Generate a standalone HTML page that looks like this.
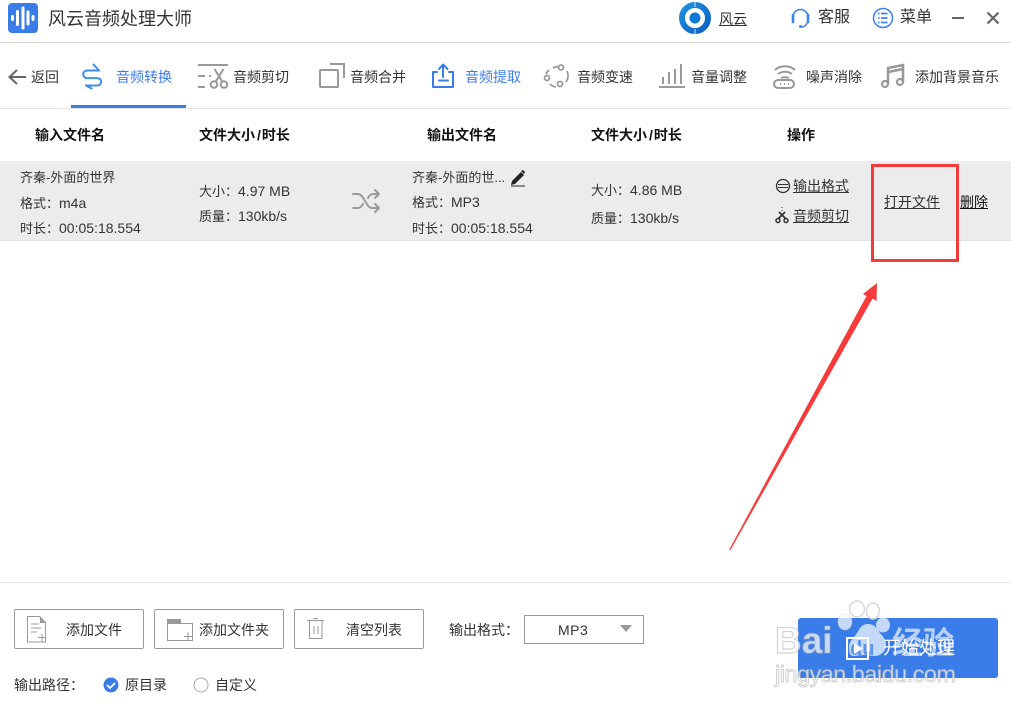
<!DOCTYPE html>
<html lang="zh-CN"><head><meta charset="utf-8"><title>风云音频处理大师</title>
<style>
html,body{margin:0;padding:0;background:#fff}
#p{position:relative;width:1011px;height:709px;overflow:hidden;background:#fff;font-family:"Liberation Sans","Noto Sans CJK SC",sans-serif;color:#333;font-size:14px}
.t{position:absolute;white-space:nowrap;line-height:20px;height:20px}
.b{position:absolute;background:#000}
.s13{font-size:13px}.s14{font-size:14px}.s16{font-size:16px}
.s13 i{font-style:normal;font-size:14px}
.blue{color:#3b7de9}
.h{font-weight:bold;color:#111}
.h i{font-style:normal;margin:0 1px 0 2px}
.u{text-decoration:underline}
.btn{position:absolute;top:609px;width:128px;height:38px;border:1px solid #999;border-radius:2px}
svg{position:absolute;left:0;top:0}
</style></head><body><div id="p">
<div class="b" style="left:0;top:42px;width:1011px;height:1px;background:#d8d8d8"></div>
<div class="b" style="left:0;top:108px;width:1011px;height:1px;background:#e6e6e6"></div>
<div class="b" style="left:71px;top:105px;width:115px;height:3px;background:#3a7ce8"></div>
<div class="b" style="left:0;top:161px;width:1011px;height:79px;background:#ececec"></div>
<div class="b" style="left:0;top:240px;width:1011px;height:1px;background:#e2e2e2"></div>
<div class="b" style="left:0;top:582px;width:1011px;height:1px;background:#e5e5e5"></div>
<div class="b" style="left:798px;top:618px;width:200px;height:60px;background:#3a7ce8;border-radius:3px"></div>

<div class="t" style="left:48px;top:9px;font-size:18px;color:#333">风云音频处理大师</div>
<div class="t s14 u" style="left:719px;top:9px">风云</div>
<div class="t s16" style="left:818px;top:8px">客服</div>
<div class="t s16" style="left:900px;top:8px">菜单</div>

<div class="t s14" style="left:31px;top:67px">返回</div>
<div class="t s14 blue" style="left:116px;top:67px">音频转换</div>
<div class="t s14" style="left:233px;top:67px">音频剪切</div>
<div class="t s14" style="left:350px;top:67px">音频合并</div>
<div class="t s14 blue" style="left:465px;top:67px">音频提取</div>
<div class="t s14" style="left:577px;top:67px">音频变速</div>
<div class="t s14" style="left:691px;top:67px">音量调整</div>
<div class="t s14" style="left:806px;top:67px">噪声消除</div>
<div class="t s14" style="left:915px;top:67px">添加背景音乐</div>

<div class="t s14 h" style="left:35px;top:125px">输入文件名</div>
<div class="t s14 h" style="left:199px;top:125px">文件大小<i>/</i>时长</div>
<div class="t s14 h" style="left:427px;top:125px">输出文件名</div>
<div class="t s14 h" style="left:591px;top:125px">文件大小<i>/</i>时长</div>
<div class="t s14 h" style="left:787px;top:125px">操作</div>

<div class="t s13" style="left:20px;top:168px">齐秦-外面的世界</div>
<div class="t s13" style="left:20px;top:193px">格式：<i>m4a</i></div>
<div class="t s13" style="left:20px;top:218px">时长：<i>00:05:18.554</i></div>
<div class="t s13" style="left:199px;top:181px">大小：<i>4.97 MB</i></div>
<div class="t s13" style="left:199px;top:206px">质量：<i>130kb/s</i></div>
<div class="t s13" style="left:412px;top:168px">齐秦-外面的世...</div>
<div class="t s13" style="left:412px;top:192px">格式：<i>MP3</i></div>
<div class="t s13" style="left:412px;top:218px">时长：<i>00:05:18.554</i></div>
<div class="t s13" style="left:591px;top:180px">大小：<i>4.86 MB</i></div>
<div class="t s13" style="left:591px;top:208px">质量：<i>130kb/s</i></div>
<div class="t s14 u" style="left:793px;top:176px">输出格式</div>
<div class="t s14 u" style="left:793px;top:206px">音频剪切</div>
<div class="t s14 u" style="left:884px;top:192px">打开文件</div>
<div class="t s14 u" style="left:960px;top:192px;color:#111">删除</div>

<div class="btn" style="left:14px"></div><div class="btn" style="left:154px"></div><div class="btn" style="left:294px"></div>
<div class="t s14" style="left:66px;top:620px">添加文件</div>
<div class="t s14" style="left:199px;top:620px">添加文件夹</div>
<div class="t s14" style="left:346px;top:620px">清空列表</div>
<div class="t s14" style="left:14px;top:675px">输出路径：</div>
<div class="t s14" style="left:125px;top:675px">原目录</div>
<div class="t s14" style="left:215px;top:675px">自定义</div>
<div class="t s14" style="left:449px;top:620px">输出格式：</div>
<div class="b" style="left:524px;top:615px;width:118px;height:27px;background:#fff;border:1px solid #999"></div>
<div class="t s14" style="left:558px;top:620px;letter-spacing:.5px">MP3</div>
<div class="t" style="left:883px;top:638px;font-size:18px;color:#fff">开始处理</div>

<svg width="1011" height="709" viewBox="0 0 1011 709" fill="none">
<defs><linearGradient id="g" x1="0" y1="0" x2="1" y2="1"><stop offset="0" stop-color="#1f8fe0"/><stop offset="1" stop-color="#0b62c4"/></linearGradient></defs>
<!-- app logo -->
<rect x="8" y="3" width="30" height="30" rx="4" fill="#3a7ce8"/>
<g stroke="#fff" stroke-linecap="round" fill="none" stroke-width="3"><path d="M12.500 16.500v3"/><path d="M17.500 11.500v13"/><path d="M23 8v20"/><path d="M28 12v12"/><path d="M33 16.500v3"/></g>
<!-- top right -->
<circle cx="695" cy="18" r="13" stroke="url(#g)" stroke-width="6"/>
<circle cx="695" cy="18" r="5.500" fill="#0e78d8"/>
<path d="M695 2v5M695 29v5" stroke="#cfe4f7" stroke-width="1"/>
<path d="M793 21v-4a7.500 7.500 0 0 1 15 0v4" stroke="#3b82ee" stroke-width="1.600"/>
<path d="M793 15v7M808 15v7" stroke="#3b82ee" stroke-width="2.600" stroke-linecap="round"/>
<path d="M807 23c-1 3-3 4-6 4" stroke="#3b82ee" stroke-width="1.500"/><circle cx="800.500" cy="26.500" r="1.500" fill="#3b82ee"/>
<circle cx="883" cy="18" r="9.500" stroke="#3b82ee" stroke-width="1.500"/>
<path d="M881 13.500h6.500M881 18h6.500M881 22.500h6.500" stroke="#3b82ee" stroke-width="1.800"/>
<path d="M878 13.500h1.500M878 18h1.500M878 22.500h1.500" stroke="#3b82ee" stroke-width="1.800"/>
<path d="M952 18h12" stroke="#666" stroke-width="2"/>
<path d="M987.500 12.500l11 11M998.500 12.500l-11 11" stroke="#666" stroke-width="2.200"/>
<!-- nav icons -->
<path d="M26 77H10M17 70l-7.500 7 7.500 7" stroke="#666" stroke-width="2"/>
<g stroke="#3d8ee8" stroke-width="2" stroke-linecap="round" stroke-linejoin="round">
<path d="M99 70.500H87a3.800 3.800 0 0 0 0 7.600H97.500a3.500 3.500 0 0 1 0 7.400H86"/><path d="M93.500 64.500l5.500 6"/><path d="M86 85.500l5.500 3"/></g>
<g stroke="#999" stroke-width="2"><path d="M198 65h30M198 76h7M198 87h7M209 76h2"/>
<path d="M214.500 69l8 13M223.500 69l-8 13" stroke-width="2"/><circle cx="214" cy="84.500" r="3.300"/><circle cx="224" cy="84.500" r="3.300"/></g>
<g stroke="#999" stroke-width="2"><rect x="320" y="70" width="18" height="17" rx="1"/><path d="M330 64h14v14"/></g>
<g stroke="#3a7ce8" stroke-width="2" stroke-linecap="round" stroke-linejoin="round"><path d="M437 72h-4v15h20V72h-4"/><path d="M443 77V65M439 69l4-4.500 4.500 4.500"/><path d="M439 80.500h9"/></g>
<g stroke="#999" stroke-width="1.800"><path d="M553 68a11 11 0 0 1 6-1.500M567 71a11 11 0 0 1-1 11M556 87a11 11 0 0 1-6-3M546 74a11 11 0 0 1 3-4"/><circle cx="561" cy="67.500" r="2.500"/><circle cx="547" cy="78" r="2.500"/><circle cx="560" cy="84" r="2.500"/></g>
<g stroke="#999" stroke-width="2"><path d="M659 87h26M663 84v-7M669 84V72M675 84V69M681 84V64"/></g>
<g stroke="#999" stroke-width="2"><path d="M775 70c5-5 15-5 20 0M778 74c4-3 10-3 14 0M781 78c2-1 6-1 8 0"/><rect x="774" y="80" width="20" height="8" rx="4" stroke-width="2"/><path d="M780 84h1M784 84h1M788 84h1"/></g>
<g stroke="#999" stroke-width="2.500"><path d="M888 84V68l15-3v17"/><path d="M888 72l15-3"/></g>
<circle cx="885" cy="84" r="3" stroke="#999" stroke-width="2.200"/><circle cx="900" cy="82" r="3" stroke="#999" stroke-width="2.200"/>
<!-- row icons -->
<g stroke="#9a9a9a" stroke-width="2" stroke-linecap="round" stroke-linejoin="round"><path d="M353 194h5c6 0 8 14 14 14h6M353 208h5c2 0 4-2 5-4M368 198c1-2 3-4 5-4h5"/><path d="M375 190l4 4-4 4M375 204l4 4-4 4"/></g>
<path d="M512 181l9-9 3 3-9 9-4 1z" fill="#222"/><path d="M521 171l2-1 2 2-1 2z" fill="#222"/><path d="M511 186h14" stroke="#222"/>
<circle cx="783" cy="186" r="6.500" stroke="#333" stroke-width="1.300"/><path d="M778 184.500h10M788 187.500h-10" stroke="#333"/>
<path d="M782 207v1M782 210v1" stroke="#333"/><path d="M779 212l7 7M785 212l-7 7" stroke="#333" stroke-width="1.800"/><circle cx="778" cy="220.500" r="2" stroke="#333" stroke-width="1.500"/><circle cx="786" cy="220.500" r="2" stroke="#333" stroke-width="1.500"/>
<!-- bottom button icons -->
<g stroke="#999" stroke-width="1"><path d="M27.500 616.500h12l6 6v19.500h-18z"/><path d="M31 624h8M31 628h10M31 632h6M38 637.500h8M42 634v8"/></g><path d="M40 616l6 7h-6z" fill="#999"/>
<g stroke="#999" stroke-width="1"><path d="M167.500 623.500h25v17h-25z"/><path d="M184 636.500h8M188 632.500v8"/></g><rect x="167" y="619" width="14" height="5" fill="#999"/>
<g stroke="#999" stroke-width="1"><path d="M307 620.500h17M313 618.500h5M309.500 621v17.500h12.500V621M314 626v8M318 626v8"/></g>
<!-- radios -->
<circle cx="111" cy="685" r="7.500" fill="#3a7ce8"/><path d="M107 685l3 3 5-5" stroke="#fff" stroke-width="1.800"/>
<circle cx="201" cy="685" r="7" stroke="#aaa"/>
<path d="M620 625h12l-6 7z" fill="#999"/>
<!-- red box + arrow -->
<rect x="872.500" y="165.500" width="85" height="95" stroke="#f43b3b" stroke-width="3"/>
<path d="M729 550L866.500 296L863 294L877 283L876.500 301L872.500 298.500L730.500 550z" fill="#f83a3a"/>
<!-- watermark -->
<g>
<ellipse cx="857" cy="609" rx="7.500" ry="8" stroke="#d8d8d8" stroke-width="1.500" fill="#fff" fill-opacity=".3"/>
<ellipse cx="873" cy="611" rx="6.500" ry="8" stroke="#d8d8d8" stroke-width="1.500" fill="#fff" fill-opacity=".3"/>
<ellipse cx="845" cy="622" rx="7" ry="8" fill="#fff" fill-opacity=".7" stroke="#ccc" stroke-opacity=".4"/>
<ellipse cx="883" cy="625" rx="7" ry="7.500" fill="#fff" fill-opacity=".7"/>
<path d="M868 624c7 0 9 5 12 9 3 4 6 6 6 12 0 7-6 11-11 11-4 0-7-1-11-1s-7 1-11 1c-3 0-4-4-4-9 0-6 5-9 8-14 3-4 4-9 11-9z" fill="#fff" fill-opacity=".7"/>
<text x="775" y="653" font-family="Liberation Sans" font-weight="bold" font-size="37" fill="#fff" fill-opacity=".72" stroke="#aaa" stroke-opacity=".5" stroke-width="1.200">Bai</text>
<text x="850" y="655" font-family="Liberation Sans" font-weight="bold" font-size="20" fill="#3a7ce8" fill-opacity=".75">du</text>
<text x="892" y="654" font-family="Liberation Sans,Noto Sans CJK SC" font-weight="bold" font-size="31" fill="#fff" fill-opacity=".65">经验</text>
<text x="775" y="682" font-family="Liberation Sans" font-size="23.500" textLength="181" fill="#fff" fill-opacity=".7" stroke="#aaa" stroke-opacity=".55" stroke-width="1">jingyan.baidu.com</text>
</g>
<!-- start icon -->
<rect x="847" y="638" width="21" height="21" stroke="#fff" stroke-width="2"/><path d="M854 643l9 5.500-9 5.500z" fill="#fff"/>
</svg>
</div></body></html>
